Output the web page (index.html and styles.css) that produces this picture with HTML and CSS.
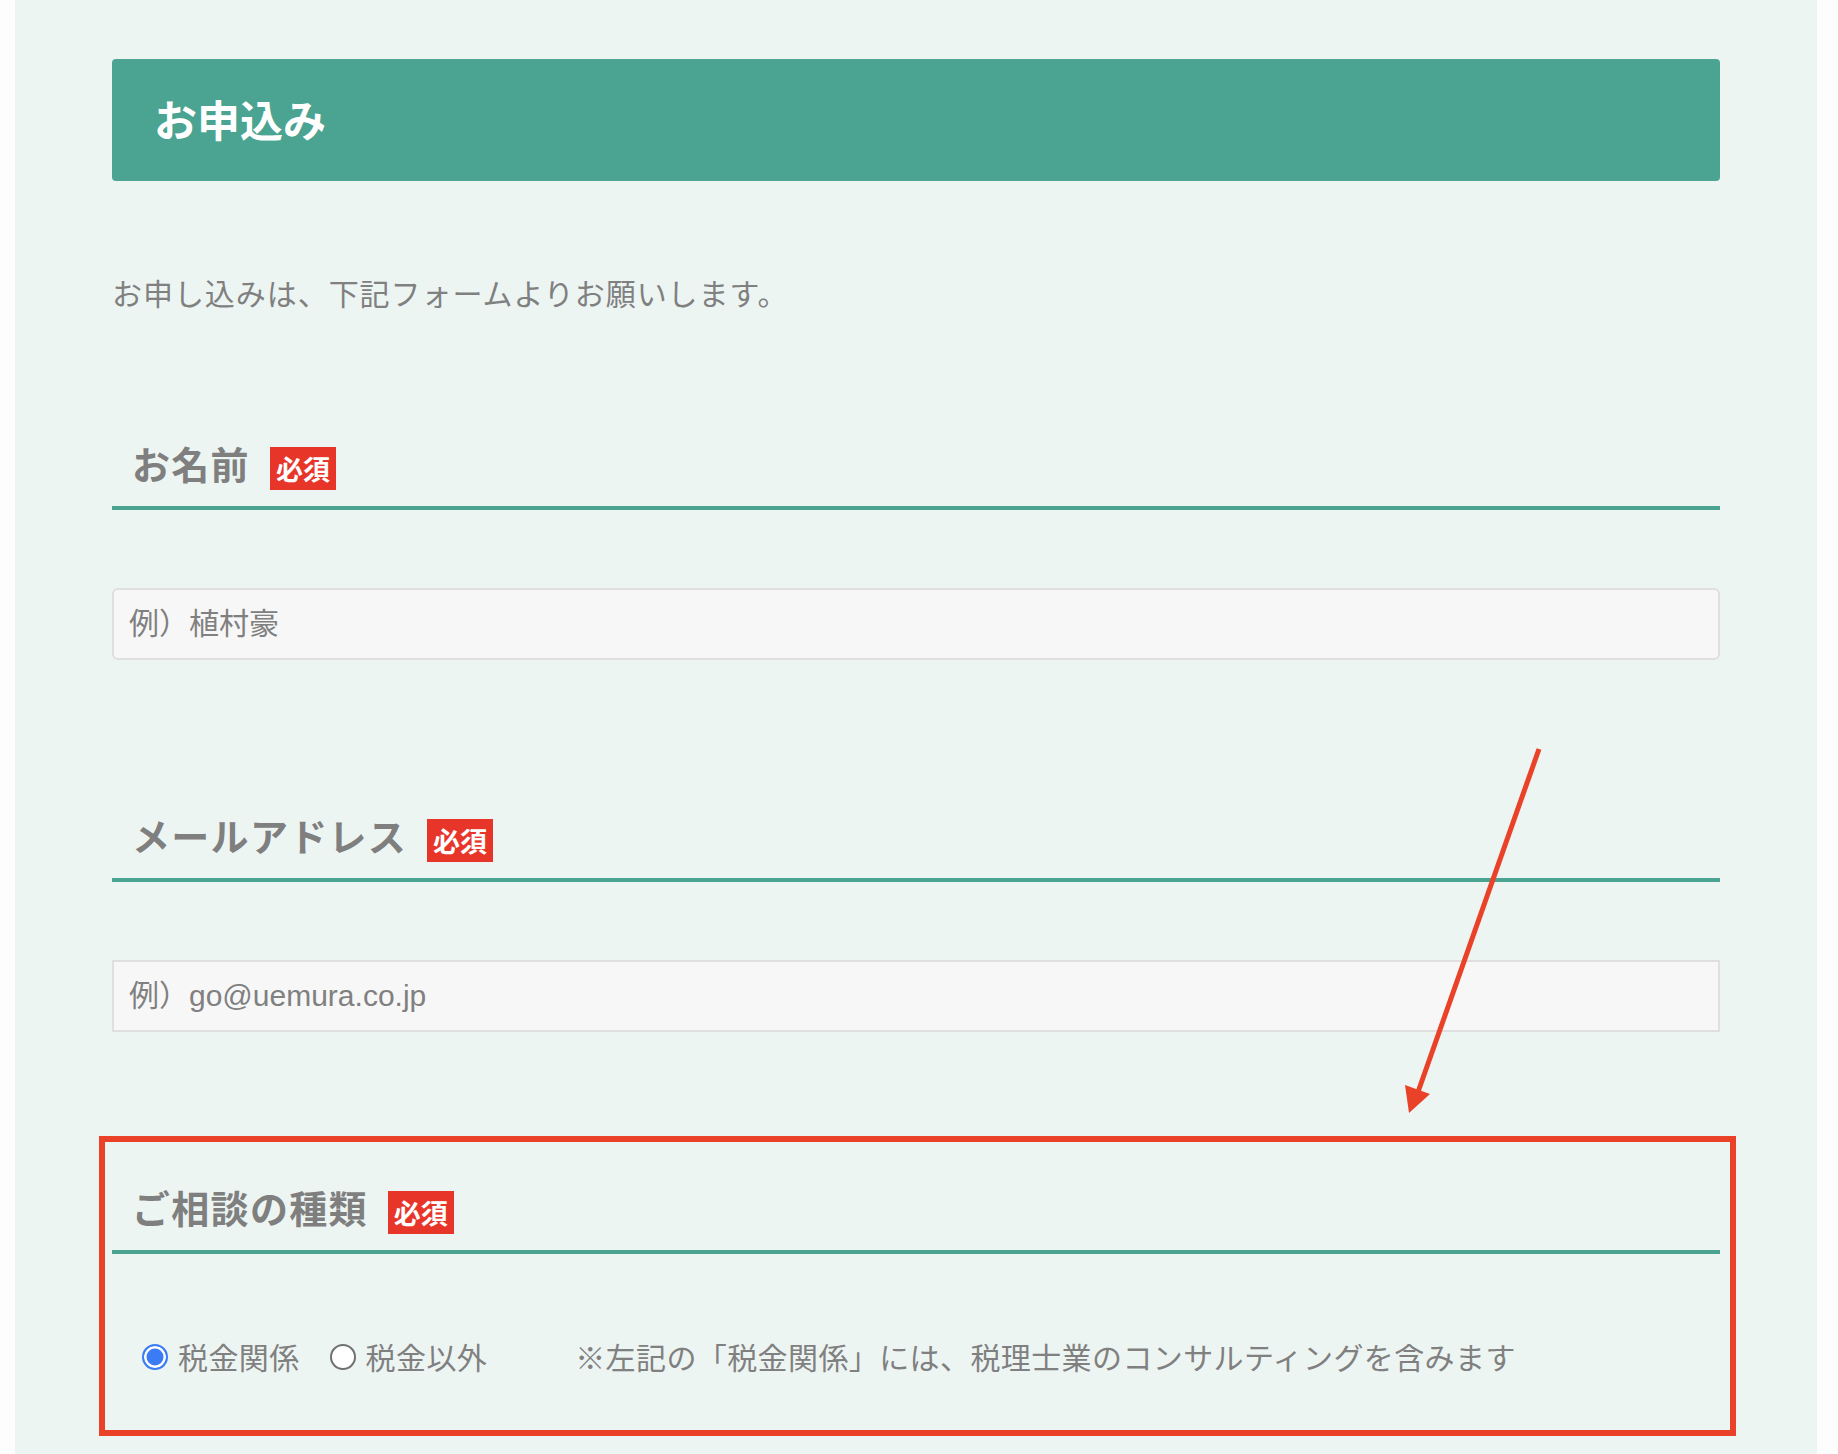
FILE: index.html
```html
<!DOCTYPE html>
<html lang="ja">
<head>
<meta charset="utf-8">
<title>お申込み</title>
<link rel="stylesheet" href="styles.css">
</head>
<body>
<div class="page">
  <main class="content">
    <h1 class="title-bar">お申込み</h1>
    <p class="intro">お申し込みは、下記フォームよりお願いします。</p>

    <section class="field">
      <div class="field-head">
        <h2 class="field-title">お名前</h2>
        <span class="badge">必須</span>
      </div>
      <input class="text-input rounded" type="text" placeholder="例）植村豪">
    </section>

    <section class="field">
      <div class="field-head">
        <h2 class="field-title">メールアドレス</h2>
        <span class="badge">必須</span>
      </div>
      <input class="text-input" type="email" placeholder="例）go@uemura.co.jp">
    </section>

    <section class="field">
      <div class="field-head">
        <h2 class="field-title">ご相談の種類</h2>
        <span class="badge">必須</span>
      </div>
      <div class="radio-row">
        <label class="radio-item"><input type="radio" name="kind" checked><span>税金関係</span></label>
        <label class="radio-item"><input type="radio" name="kind"><span>税金以外</span></label>
        <span class="note">※左記の「税金関係」には、税理士業のコンサルティングを含みます</span>
      </div>
    </section>
  </main>
</div>

<svg class="annotation" width="1838" height="1454" viewBox="0 0 1838 1454" aria-hidden="true">
  <line x1="1539" y1="749" x2="1418" y2="1092" stroke="#ea4228" stroke-width="5"/>
  <polygon points="1409,1113 1405,1085 1430,1094" fill="#ea4228"/>
  <rect x="102" y="1139" width="1631" height="294" fill="none" stroke="#ea4228" stroke-width="6"/>
</svg>
</body>
</html>
```

FILE: styles.css
```css
html, body {
  margin: 0;
  padding: 0;
  height: 1454px;
  overflow: hidden;
}

body {
  position: relative;
  background: #fdfdfd;
  font-family: "Liberation Sans", "Noto Sans CJK JP", sans-serif;
  color: #808080;
}

.page {
  margin-left: 15px;
  width: 1802px;
  height: 1454px;
  background: #edf5f3;
}

.content {
  margin-left: 97px;
  width: 1608px;
  padding-top: 59px;
}

.title-bar {
  margin: 0;
  box-sizing: border-box;
  height: 122px;
  padding: 0 0 5px 42px;
  display: flex;
  align-items: center;
  background: #4aa491;
  border-radius: 4px;
  color: #ffffff;
  font-family: "Noto Sans CJK JP", sans-serif;
  font-size: 43px;
  font-weight: 700;
}

.intro {
  margin: 89px 0 126px;
  font-family: "Noto Sans CJK JP", sans-serif;
  font-size: 30px;
  line-height: 45px;
  letter-spacing: 0.95px;
}

.field + .field {
  margin-top: 153px;
}

.field-head {
  display: flex;
  align-items: flex-end;
  padding: 0 0 16px 20px;
  border-bottom: 4px solid #4aa491;
}

.field-title {
  margin: 0;
  padding-bottom: 6px;
  font-family: "Noto Sans CJK JP", sans-serif;
  font-size: 38px;
  line-height: 43px;
  font-weight: 700;
  letter-spacing: 1.3px;
  color: #7f7f7f;
}

.badge {
  margin-left: 20px;
  width: 66px;
  height: 43px;
  line-height: 43px;
  text-align: center;
  background: #e8352a;
  color: #ffffff;
  font-family: "Noto Sans CJK JP", sans-serif;
  font-size: 27px;
  font-weight: 700;
}

.text-input {
  display: block;
  box-sizing: border-box;
  width: 100%;
  height: 72px;
  margin: 78px 0 0;
  padding: 0 15px;
  border: 2px solid #dfdfdf;
  background: #f7f7f7;
  font-family: "Liberation Sans", "Noto Sans CJK JP", sans-serif;
  font-size: 30px;
  color: #808080;
  outline: none;
}

.text-input::placeholder {
  color: #808080;
  opacity: 1;
}

.rounded {
  border-radius: 6px;
}

.radio-row {
  display: flex;
  align-items: center;
  margin-top: 80px;
  padding-left: 30px;
  height: 45px;
  font-family: "Noto Sans CJK JP", sans-serif;
  font-size: 30px;
  line-height: 45px;
  letter-spacing: 0.4px;
}

.radio-item {
  display: flex;
  align-items: center;
  gap: 10px;
  margin-right: 30px;
}

.radio-item input {
  appearance: none;
  -webkit-appearance: none;
  flex: none;
  box-sizing: border-box;
  width: 26px;
  height: 26px;
  margin: 0;
  border-radius: 50%;
  border: 2px solid #707070;
  background: #ffffff;
}

.radio-item input:checked {
  border-color: #3b7cf6;
  background: #3b7cf6;
  box-shadow: inset 0 0 0 2.5px #ffffff;
}

.note {
  margin-left: 58px;
}

.annotation {
  position: absolute;
  left: 0;
  top: 0;
  pointer-events: none;
}
```
